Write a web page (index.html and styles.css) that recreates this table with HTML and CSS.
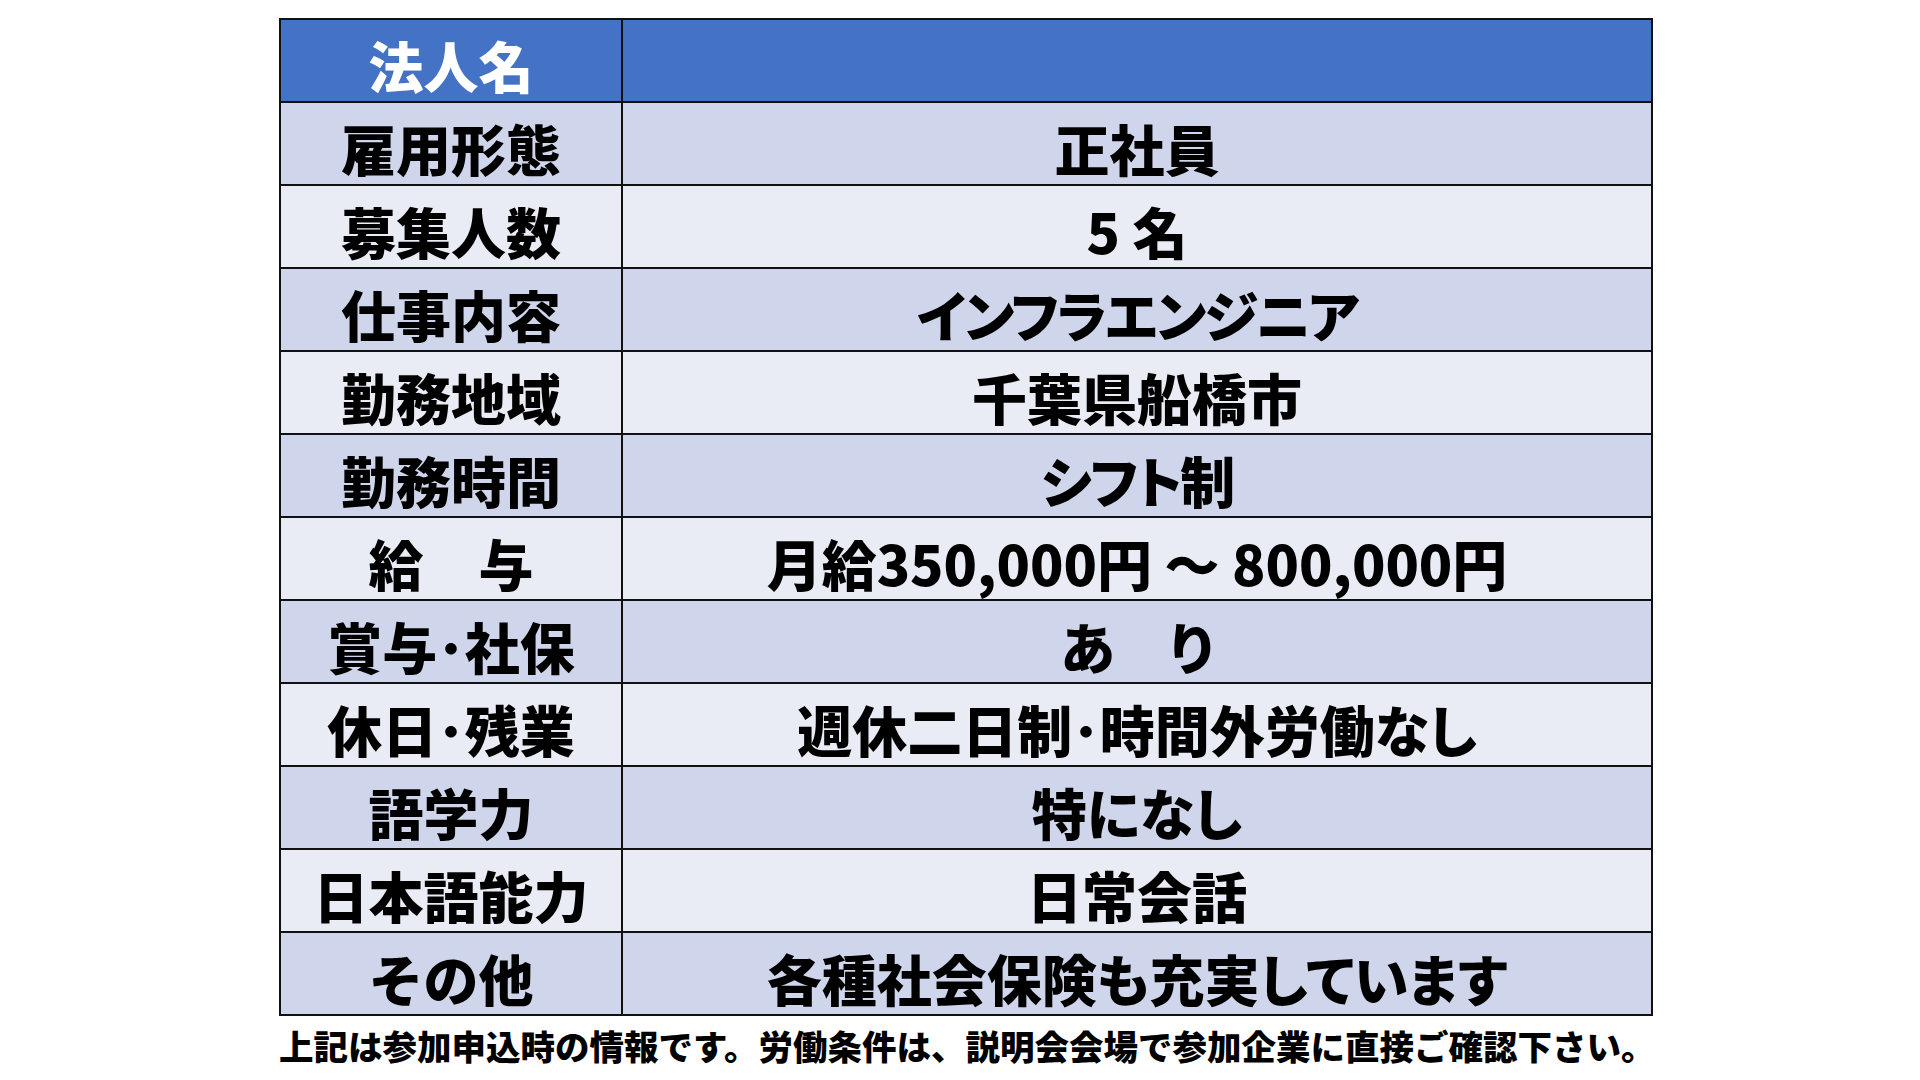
FILE: index.html
```html
<!DOCTYPE html>
<html lang="ja">
<head>
<meta charset="utf-8">
<link rel="stylesheet" href="styles.css">
</head>
<body>
<div class="page">
  <table class="info">
    <tr class="head"><th class="label">法人名</th><td class="value"></td></tr>
    <tr class="odd"><th class="label">雇用形態</th><td class="value">正社員</td></tr>
    <tr class="even"><th class="label">募集人数</th><td class="value">5 名</td></tr>
    <tr class="odd"><th class="label">仕事内容</th><td class="value kana">インフラエンジニア</td></tr>
    <tr class="even"><th class="label">勤務地域</th><td class="value">千葉県船橋市</td></tr>
    <tr class="odd"><th class="label">勤務時間</th><td class="value kana">シフト制</td></tr>
    <tr class="even"><th class="label">給　与</th><td class="value">月給350,000円 ～ 800,000円</td></tr>
    <tr class="odd"><th class="label">賞与･社保</th><td class="value">あ　り</td></tr>
    <tr class="even"><th class="label">休日･残業</th><td class="value">週休二日制･時間外労働なし</td></tr>
    <tr class="odd"><th class="label">語学力</th><td class="value">特になし</td></tr>
    <tr class="even"><th class="label">日本語能力</th><td class="value">日常会話</td></tr>
    <tr class="odd"><th class="label">その他</th><td class="value">各種社会保険も充実しています</td></tr>
  </table>
  <p class="note">上記は参加申込時の情報です。労働条件は、説明会会場で参加企業に直接ご確認下さい。</p>
</div>
</body>
</html>
```
FILE: styles.css
```css
html, body {
  margin: 0;
  padding: 0;
  background: #ffffff;
}
body {
  width: 1920px;
  height: 1080px;
  overflow: hidden;
  font-family: "Noto Sans CJK JP", "Noto Sans", sans-serif;
  color: #000;
}
.page {
  padding: 18px 0 0 279px;
}
.info {
  border-collapse: collapse;
  width: 1374px;
  table-layout: fixed;
}
.info th, .info td {
  border: 2px solid #111;
  height: 83px;
  padding: 8px 0 0 0;
  box-sizing: border-box;
  text-align: center;
  vertical-align: middle;
  font-size: 55px;
  font-weight: 900;
  line-height: 1;
  white-space: nowrap;
}
.info .label {
  width: 342px;
}
.info .value {
  font-feature-settings: "palt" 1;
}
.info .kana {
  letter-spacing: -2px;
}
.head th, .head td {
  background: #4472c4;
  color: #ffffff;
}
.odd th, .odd td {
  background: #cfd5ea;
}
.even th, .even td {
  background: #e9ebf5;
}
.note {
  margin: 9px 0 0 0;
  font-size: 34.5px;
  font-weight: 900;
  line-height: 1.2;
  white-space: nowrap;
}
```
